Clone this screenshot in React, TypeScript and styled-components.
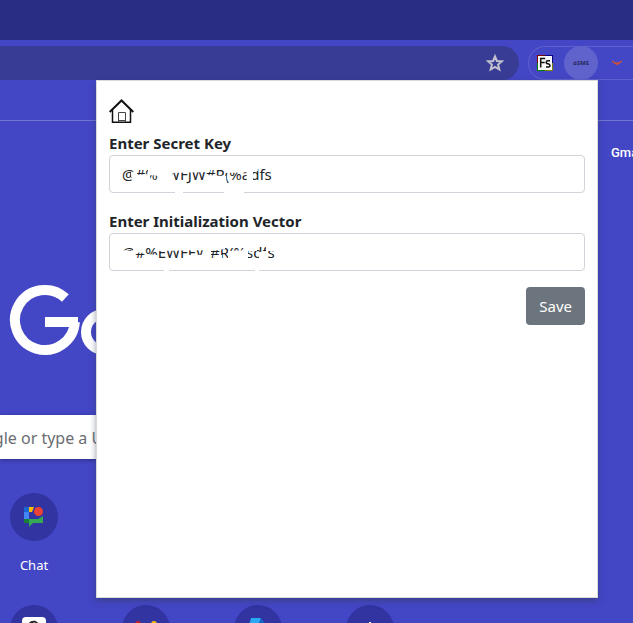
import React, { useState } from "react";
import styled, { createGlobalStyle } from "styled-components";

const GlobalStyle = createGlobalStyle`
  *, *::before, *::after { box-sizing: border-box; }
  html, body { margin: 0; height: 100%; overflow: hidden; }
  #root { height: 100%; }
  body { background: #4346c5; font-family: "Noto Sans", "Open Sans", sans-serif; }
`;

const Browser = styled.div`
  position: relative;
  height: 100%;
  overflow: hidden;
  display: flex;
  flex-direction: column;
  color: #fff;
`;

const TabStrip = styled.header`
  flex: none;
  height: 40px;
  background: #292d84;
`;

const Toolbar = styled.nav`
  flex: none;
  height: 40px;
  padding-top: 6px;
  display: flex;
  gap: 9px;
`;

const AddressBar = styled.div`
  flex: 1;
  height: 34px;
  padding-right: 14px;
  display: flex;
  align-items: center;
  justify-content: flex-end;
  background: #383c95;
  border-radius: 0 17px 17px 0;
`;

const IconButton = styled.button<{ $active?: boolean }>`
  display: flex;
  align-items: center;
  justify-content: center;
  width: ${(p) => (p.$active ? 34 : 20)}px;
  height: ${(p) => (p.$active ? 34 : 20)}px;
  padding: 0;
  border: 0;
  border-radius: 50%;
  background: ${(p) => (p.$active ? "#6163cd" : "transparent")};
`;

const Extensions = styled.div`
  flex: none;
  width: 105px;
  height: 34px;
  padding-left: 6px;
  display: flex;
  align-items: center;
  gap: 9px;
  border: 1px solid #5d60cc;
  border-right: 0;
  border-radius: 17px 0 0 17px;
`;

const BookmarkBar = styled.div`
  flex: none;
  height: 41px;
  border-bottom: 1px solid #7274d2;
`;

const NewTab = styled.main`
  flex: 1;
  display: flex;
  flex-direction: column;
  align-items: flex-start;
  min-height: 0;
`;

const PageLinks = styled.div`
  flex: none;
  align-self: flex-end;
  width: 22px;
  height: 63px;
  padding-top: 22px;
`;

const PageLink = styled.a`
  display: block;
  color: #fff;
  font: 500 13px/20px Roboto, sans-serif;
  text-decoration: none;
`;

const Logo = styled.svg`
  flex: none;
  display: block;
  margin-top: 96px;
`;

const Search = styled.label`
  flex: none;
  display: flex;
  width: calc(100% - 73px);
  height: 44px;
  margin-top: 59px;
  background: #fff;
  box-shadow: 0 1px 4px rgba(0, 0, 0, 0.35);
`;

const SearchInput = styled.input`
  width: 230px;
  margin-left: -92px;
  padding: 2px 0 0;
  border: 0;
  outline: 0;
  background: transparent;
  font: 16px/24px "Noto Sans", sans-serif;
  &::placeholder { color: #6b6d72; opacity: 1; }
`;

const Shortcuts = styled.div`
  flex: none;
  display: grid;
  grid-template-columns: repeat(4, 112px);
  grid-auto-rows: 112px;
  margin: 34px 0 0 -22px;
`;

const Shortcut = styled.a<{ $column: number }>`
  grid-column: ${(p) => p.$column};
  display: flex;
  flex-direction: column;
  align-items: center;
  gap: 14px;
  color: #fff;
  font: 13px/20px "Noto Sans", sans-serif;
  text-decoration: none;
`;

const Disc = styled.span`
  display: flex;
  align-items: center;
  justify-content: center;
  width: 48px;
  height: 48px;
  border-radius: 50%;
  background: #3134a1;
`;

const Popup = styled.section`
  position: absolute;
  top: 80px;
  left: 96px;
  right: 35px;
  min-height: 518px;
  padding: 16px 12px;
  display: flex;
  flex-direction: column;
  background: #fff;
  border: 1px solid #d9dcd6;
  box-shadow: 0 3px 6px rgba(50, 60, 90, 0.5);
  color: #212529;
`;

const HomeButton = styled.button`
  display: flex;
  width: 26px;
  height: 28px;
  padding: 0;
  border: 0;
  background: none;
`;

const Form = styled.form`
  display: flex;
  flex-direction: column;
  gap: 16px;
  margin-top: 6px;
`;

const Field = styled.div`
  position: relative;
  display: flex;
  flex-direction: column;
`;

const FieldLabel = styled.label`
  font-size: 15px;
  font-weight: 700;
  line-height: 24px;
`;

const TextBox = styled.input`
  width: 100%;
  height: 38px;
  padding: 6px 12px;
  border: 1px solid #ced4da;
  border-radius: 4px;
  outline: 0;
  background: #fff;
  color: #212529;
  font: 15px/24px "Noto Sans", sans-serif;
`;

const Mask = styled.svg`
  position: absolute;
  left: 0;
  bottom: 0;
  pointer-events: none;
`;

const SaveButton = styled.button`
  align-self: flex-end;
  height: 38px;
  padding: 0 13px;
  border: 0;
  border-radius: 4px;
  background: #6c757d;
  color: #fff;
  font: 15px/24px "Noto Sans", sans-serif;
`;

function StarIcon() {
  return (
    <svg width="20" height="20" viewBox="0 0 20 20" fill="none" stroke="#c3c3cf" strokeWidth="2">
      <path d="M10 3.4l1.900 4.600 5 .4-3.800 3.200 1.200 4.900-4.300-2.600-4.300 2.600 1.200-4.900-3.800-3.200 5-.4z" />
    </svg>
  );
}

function FsIcon() {
  return (
    <svg width="16" height="16" viewBox="0 0 16 16">
      <path fill="#800000" d="M0 0h8v8H0z" />
      <path fill="#000080" d="M8 0h8v8H8z" />
      <path fill="#008000" d="M0 8h8v8H0z" />
      <path fill="#808000" d="M8 8h8v8H8z" />
      <path fill="#f8f8f8" d="M1 1h14v14H1z" />
      <path fill="none" stroke="#111" strokeWidth="1.5" d="M3.700 12.500V3.500H8.200M3.700 7.500h4M13 5.700H10.800Q9.200 5.700 9.200 7.200T11.200 8.800Q13 9.300 13 10.600T11.300 11.900H9" />
    </svg>
  );
}

const TinyMark = styled.span`
  color: #25285c;
  font: 700 6px/8px "Open Sans", sans-serif;
`;

function BirdIcon() {
  return (
    <svg width="10" height="6" viewBox="0 0 10 6" fill="none" stroke="#c9503f">
      <path d="M.3 1L2.500 3h5L9.700 1" strokeWidth="1.400" />
      <path d="M3 3l2 1.500L7 3" strokeWidth="1.400" />
    </svg>
  );
}

function ChatIcon() {
  return (
    <svg width="20" height="20" viewBox="0 0 20 20">
      <path fill="#1967d2" d="M0 0h5v5H0z" />
      <path fill="#fbbc04" d="M5 0h5L8 5H5z" />
      <path fill="#4285f4" d="M0 5h5v7H0z" />
      <path fill="#188038" d="M0 12h5v4H0z" />
      <path fill="#34a853" d="M5 12h9l5-3v7H9l-4 4z" />
      <circle cx="14.500" cy="4.500" r="4.500" fill="#ea4335" />
    </svg>
  );
}

function HomeIcon() {
  return (
    <svg width="26" height="28" viewBox="0 0 26 28" fill="none" stroke="#111">
      <path strokeWidth="2" d="M.7 15L12.500 3.500l11.800 11.500" />
      <path strokeWidth="1.500" d="M3.500 12.500v12.800h18V12.500" />
      <path strokeWidth="1" stroke="#444" d="M9.500 25v-9.500h7V25M10 23.500h6" />
    </svg>
  );
}

const fields = [
  {
    id: "secret",
    label: "Enter Secret Key",
    value: "@#%EWFJW#R(%adfs",
    smear:
      "M22 17l6-1 1 12h-6zM27 20l14-1v10H27zM39 8l12 2v11l-12-1zM50 8h11l4 19H49zM60 8h41v9l-40 1zM97 20l20 1 1 9H96zM115 8h26v9l-25 1zM137 8h7v20h-6zM142 8h6l1 8h-7z",
    gaps: "M66 37h8M115 37h20",
  },
  {
    id: "vector",
    label: "Enter Initialization Vector",
    value: "@#%EWFEW#R(%sdfs",
    smear:
      "M12 17l14 1v12H12zM24 8h13l-1 12-12-1zM37 21l11 1v6H37zM48 8h51v9l-50 1zM79 22h18v5H79zM93 8h9v20h-7zM102 8h14v8l-14 2zM106 22h7v5h-7zM119 18l20-1v12h-20zM137 8h11v10h-11zM150 19l7-1v11h-7zM157 8h10v10h-10z",
    gaps: "M55 37h5M146 37h4",
  },
];

function KeyForm() {
  const [values, setValues] = useState(fields.map((f) => f.value));
  return (
    <Form onSubmit={(e) => e.preventDefault()}>
      {fields.map((f, i) => (
        <Field key={f.id}>
          <FieldLabel htmlFor={f.id}>{f.label}</FieldLabel>
          <TextBox
            id={f.id}
            value={values[i]}
            onChange={(e) => setValues(values.map((v, j) => (j === i ? e.target.value : v)))}
          />
          <Mask width="180" height="38" viewBox="0 0 180 38">
            <path d={f.smear} fill="#fff" />
            <path d={f.gaps} stroke="#fff" strokeWidth="3" />
          </Mask>
        </Field>
      ))}
      <SaveButton type="submit">Save</SaveButton>
    </Form>
  );
}

export default function App() {
  return (
    <Browser>
      <GlobalStyle />
      <TabStrip />
      <Toolbar>
        <AddressBar>
          <IconButton aria-label="Bookmark this tab"><StarIcon /></IconButton>
        </AddressBar>
        <Extensions>
          <IconButton aria-label="Fs extension"><FsIcon /></IconButton>
          <IconButton $active aria-label="SME extension"><TinyMark>óSME</TinyMark></IconButton>
          <IconButton aria-label="Bird extension"><BirdIcon /></IconButton>
        </Extensions>
      </Toolbar>
      <BookmarkBar />
      <NewTab>
        <PageLinks><PageLink href="#mail">Gmail</PageLink></PageLinks>
        <Logo width="150" height="76" viewBox="0 0 150 76" fill="none" stroke="#fff" strokeWidth="10" role="img" aria-label="Google">
          <path d="M65.400 18A30 30 0 1 0 74.900 42" />
          <path d="M45 42h33" />
          <circle cx="104" cy="52" r="18" />
        </Logo>
        <Search>
          <SearchInput aria-label="Search" placeholder="Search Google or type a URL" />
        </Search>
        <Shortcuts>
          <Shortcut $column={1} href="#chat"><Disc><ChatIcon /></Disc>Chat</Shortcut>
          <Shortcut $column={1} href="#one" aria-label="Shortcut">
            <Disc>
              <svg width="24" height="24" viewBox="0 0 24 24">
                <rect width="24" height="24" rx="4" fill="#fff" />
                <path d="M7 7q2-3 6-2.500l4 3M10 6l4 1v3" fill="none" stroke="#222" strokeWidth="1.600" />
              </svg>
            </Disc>
          </Shortcut>
          <Shortcut $column={2} href="#two" aria-label="Shortcut">
            <Disc>
              <svg width="24" height="18" viewBox="0 0 24 18">
                <circle cx="4" cy="4" r="3" fill="#c5221f" />
                <circle cx="20" cy="4" r="3" fill="#fbbc04" />
              </svg>
            </Disc>
          </Shortcut>
          <Shortcut $column={3} href="#three" aria-label="Shortcut">
            <Disc>
              <svg width="20" height="24" viewBox="0 0 20 24">
                <path d="M3 1h10L9 12H0z" fill="#29a9f5" />
                <path d="M13 1l5 7-5 4H9z" fill="#1565c9" />
              </svg>
            </Disc>
          </Shortcut>
          <Shortcut $column={4} href="#four" aria-label="Shortcut">
            <Disc>
              <svg width="14" height="14" viewBox="0 0 14 14" stroke="#fff" strokeWidth="2"><path d="M7 0v14M0 7h14" /></svg>
            </Disc>
          </Shortcut>
        </Shortcuts>
      </NewTab>
      <Popup>
        <HomeButton aria-label="Home"><HomeIcon /></HomeButton>
        <KeyForm />
      </Popup>
    </Browser>
  );
}
